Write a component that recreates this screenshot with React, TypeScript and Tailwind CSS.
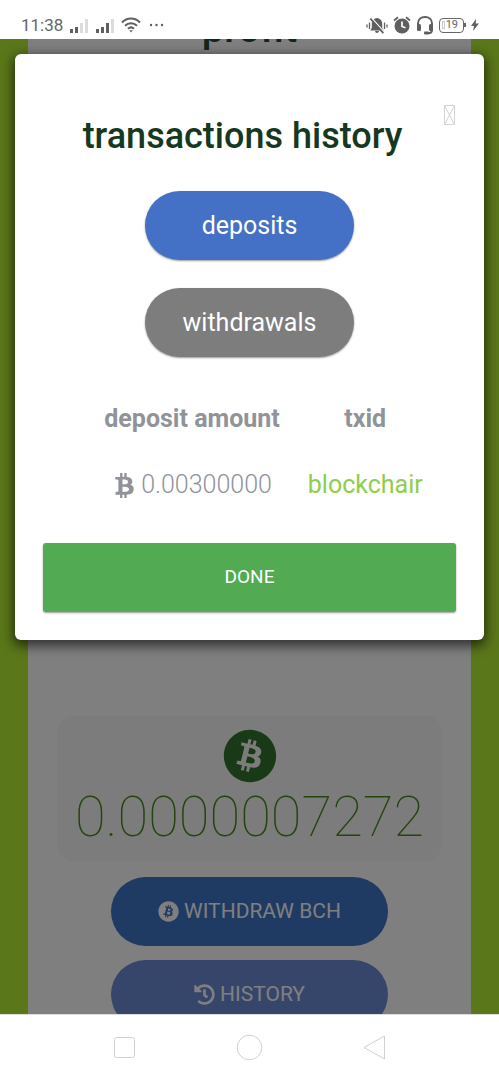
import React, { useState } from 'react';
import { FaBitcoin, FaBtc, FaHistory } from 'react-icons/fa';

type Transaction = {
  amount: string;
  explorer: string;
};

const deposits: Transaction[] = [{ amount: '0.00300000', explorer: 'blockchair' }];

function SignalIcon({ level }: { level: number }) {
  return (
    <svg width="20" height="15" viewBox="0 0 20 15">
      {[4, 6, 10, 14].map((height, index) => (
        <rect
          key={height}
          x={index * 5 + 1}
          y={15 - height}
          width="3"
          height={height}
          fill={index < level ? '#5f5f5f' : '#dcdcdc'}
        />
      ))}
    </svg>
  );
}

function WifiIcon() {
  return (
    <svg width="20" height="16" viewBox="0 0 20 16" fill="none" stroke="#5f5f5f" strokeWidth="2">
      <path d="M1 5.5C6 .2 14 .2 19 5.5" />
      <path d="M4 8.7c3.4-3.4 8.6-3.4 12 0" />
      <path d="M7 11.8c1.8-1.7 4.2-1.7 6 0" />
      <path d="M8.2 13.3h3.6L10 15.6z" fill="#5f5f5f" stroke="none" />
    </svg>
  );
}

function MutedBellIcon() {
  return (
    <svg width="22" height="17" viewBox="0 0 22 17">
      <path d="M11 1c-3.4.4-5.2 3-5.2 5.5V11l-1.6 2.5h13.6L16.2 11V6.5C16.200 4 14.400 1.400 11 1z" fill="#5f5f5f" />
      <path d="M9 14h4c-.3 2.5-3.700 2.500-4 0z" fill="#5f5f5f" />
      <path d="M5.6 1l13 14.5" stroke="#fff" strokeWidth="1.2" />
      <path d="M4.4 1.6l13 14.5" stroke="#5f5f5f" strokeWidth="1.7" />
      <path d="M1 7.5v3M3.5 5.5V12M18.5 5.500V12M21 7.500v3" stroke="#5f5f5f" strokeWidth="1.3" />
    </svg>
  );
}

function AlarmIcon() {
  return (
    <svg width="18" height="18" viewBox="0 0 18 18">
      <circle cx="9" cy="10" r="7.5" fill="#5f5f5f" />
      <path d="M1 4.5l4-3.300M17 4.500l-4-3.300" stroke="#5f5f5f" strokeWidth="1.8" />
      <path d="M9 5.5v5l3.5 1.2" fill="none" stroke="#fff" strokeWidth="1.7" />
    </svg>
  );
}

function HeadsetIcon() {
  return (
    <svg width="18" height="20" viewBox="0 0 18 20">
      <path d="M2 13V8.5C2 4.5 5 2 9 2s7 2.5 7 6.5V15c0 2-1.5 3.2-4 3.2" fill="none" stroke="#5f5f5f" strokeWidth="2" />
      <rect x="1" y="9" width="4" height="7" rx="1.5" fill="#5f5f5f" />
      <rect x="13" y="9" width="4" height="7" rx="1.5" fill="#5f5f5f" />
      <rect x="8" y="16.5" width="5" height="3" rx="1" fill="#5f5f5f" />
    </svg>
  );
}

function StatusBar() {
  return (
    <header className="flex h-[39px] shrink-0 items-end justify-between bg-white pr-5 pb-1 pl-[21px] text-[#666]">
      <div className="flex items-center gap-1">
        <span className="w-[44px] text-[17px] leading-5 whitespace-nowrap">11:38</span>
        <SignalIcon level={2} />
        <div className="px-[2px]">
          <SignalIcon level={3} />
        </div>
        <WifiIcon />
        <svg width="22" height="4" viewBox="0 0 22 4" fill="#5f5f5f">
          <circle cx="6" cy="2" r="1.2" />
          <circle cx="11.5" cy="2" r="1.2" />
          <circle cx="17" cy="2" r="1.2" />
        </svg>
      </div>
      <div className="flex items-center gap-[5px]">
        <MutedBellIcon />
        <AlarmIcon />
        <HeadsetIcon />
        <div className="flex items-center">
          <div className="flex h-[15px] w-[25px] items-center justify-end gap-px rounded-[4px] border border-[#666] pr-[5px]">
            <span className="h-2 w-[3px] border border-[#ccc]" />
            <span className="text-[11px] leading-3">19</span>
          </div>
          <span className="h-1 w-[2px] bg-[#666]" />
        </div>
        <svg width="8" height="12" viewBox="0 0 8 12" fill="#5f5f5f">
          <path d="M5 0L0 7h3l-1 5 6-7.500H4.800z" />
        </svg>
      </div>
    </header>
  );
}

function Wallet() {
  return (
    <main className="h-full bg-[#b4ee32] px-7">
      <div className="flex h-full flex-col items-center overflow-hidden bg-white px-[29px]">
        <h2 className="-mt-10 h-[56px] shrink-0 text-[40px] leading-[60px] font-medium text-[#18502c]">profit</h2>
        <section className="mt-[661px] flex h-[145px] w-full shrink-0 flex-col items-center rounded-2xl bg-[#f8f8f8] pt-[13px] text-[#30742f]">
          <FaBitcoin size={54} />
          <p className="pt-1 text-[56px] leading-[60px] font-thin text-[#468c18]">0.0000007272</p>
        </section>
        <button
          type="button"
          className="mt-4 flex h-[69px] w-[277px] shrink-0 items-center justify-center gap-[5px] rounded-full bg-[#3e74c6] text-[21px] text-white"
        >
          <FaBitcoin size={21} />
          WITHDRAW BCH
        </button>
        <button
          type="button"
          className="mt-[14px] flex h-[69px] w-[277px] shrink-0 items-center justify-center gap-[5px] rounded-full bg-[#6c8cd4] text-[21px] text-white"
        >
          <FaHistory size={21} />
          HISTORY
        </button>
      </div>
    </main>
  );
}

function HistoryDialog({ onClose }: { onClose: () => void }) {
  return (
    <div className="absolute inset-0 bg-black/50 p-[15px]">
      <div
        role="dialog"
        aria-labelledby="history-title"
        className="relative flex flex-col items-center rounded-md bg-white px-7 pt-[58px] pb-7 shadow-[0_4px_12px_2px_rgba(0,0,0,0.6)]"
      >
        <button type="button" aria-label="Close" onClick={onClose} className="absolute top-[50px] right-7">
          <svg width="13" height="22" viewBox="0 0 13 22" fill="none" stroke="#d4d4d4">
            <path d="M1.5 1.5h10v19h-10zM1.5 1.5l10 19M11.5 1.5l-10 19" />
          </svg>
        </button>
        <h1 id="history-title" className="pr-[14px] text-[36px] leading-[48px] font-medium whitespace-nowrap text-[#163820]">
          transactions history
        </h1>
        <div className="flex flex-col gap-7 pt-[31px]">
          <button type="button" className="h-[69px] w-[209px] rounded-full bg-[#4470c6] text-[25px] text-white shadow-[0_1px_2px_rgba(0,0,0,0.4)]">
            deposits
          </button>
          <button type="button" className="h-[69px] w-[209px] rounded-full bg-[#7d7d7d] text-[25px] text-white shadow-[0_1px_2px_rgba(0,0,0,0.4)]">
            withdrawals
          </button>
        </div>
        <table className="mt-[29px] ml-7 text-[25px] text-[#90939a]">
          <thead>
            <tr className="h-[66px]">
              <th className="px-[14px] font-bold">deposit amount</th>
              <th className="px-[14px] font-bold">txid</th>
            </tr>
          </thead>
          <tbody>
            {deposits.map((row) => (
              <tr key={row.amount} className="h-[66px]">
                <td className="px-[14px]">
                  <span className="flex items-center justify-center gap-1 font-light">
                    <FaBtc size={25} />
                    {row.amount}
                  </span>
                </td>
                <td className="px-[14px] text-center">
                  <a href="#blockchair" className="text-[#8fce4a]">
                    {row.explorer}
                  </a>
                </td>
              </tr>
            ))}
          </tbody>
        </table>
        <button
          type="button"
          onClick={onClose}
          className="mt-[25px] h-[69px] w-full rounded-[3px] bg-[#52ab52] text-[19px] text-white shadow-[0_1px_2px_rgba(0,0,0,0.4)]"
        >
          DONE
        </button>
      </div>
    </div>
  );
}

function NavigationBar() {
  return (
    <nav className="flex h-[66px] shrink-0 items-center justify-center gap-[98px] border-t border-[#ddd] bg-white">
      <button type="button" aria-label="Recent apps">
        <svg width="27" height="27" viewBox="0 0 27 27" fill="none" stroke="#d0d0d0">
          <rect x="3.5" y="3.5" width="20" height="20" rx="2" />
        </svg>
      </button>
      <button type="button" aria-label="Home">
        <svg width="27" height="27" viewBox="0 0 27 27" fill="none" stroke="#d0d0d0">
          <circle cx="13.5" cy="13.5" r="12.3" />
        </svg>
      </button>
      <button type="button" aria-label="Back">
        <svg width="27" height="27" viewBox="0 0 27 27" fill="none" stroke="#d0d0d0">
          <path d="M3 13.5L23.5 2v23z" />
        </svg>
      </button>
    </nav>
  );
}

export default function App() {
  const [isHistoryOpen, setIsHistoryOpen] = useState(true);

  return (
    <div className="flex h-screen flex-col font-[Roboto,sans-serif]">
      <StatusBar />
      <div className="relative min-h-0 flex-1 overflow-hidden">
        <Wallet />
        {isHistoryOpen && <HistoryDialog onClose={() => setIsHistoryOpen(false)} />}
      </div>
      <NavigationBar />
    </div>
  );
}
